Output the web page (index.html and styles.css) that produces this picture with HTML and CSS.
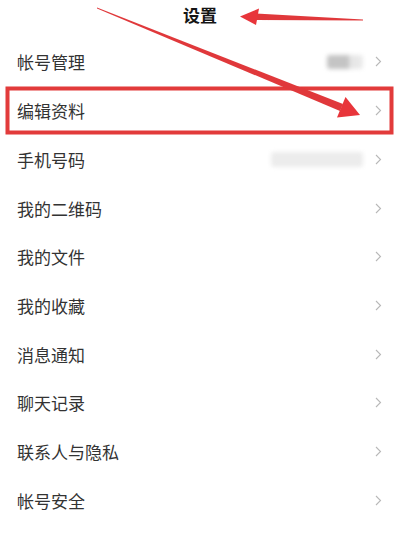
FILE: index.html
```html
<!DOCTYPE html>
<html lang="zh-CN">
<head>
<meta charset="utf-8">
<title>设置</title>
<link rel="stylesheet" href="styles.css">
</head>
<body>
<div class="page">
  <header class="header">设置</header>
  <ul class="list">
    <li class="row"><span class="label">帐号管理</span><span class="value"><span class="blur blur-account"></span></span><svg class="chev" viewBox="0 0 7 11"><path d="M1 1l4.5 4.5L1 10"/></svg></li>
    <li class="row"><span class="label">编辑资料</span><span class="value"></span><svg class="chev" viewBox="0 0 7 11"><path d="M1 1l4.5 4.5L1 10"/></svg></li>
    <li class="row"><span class="label">手机号码</span><span class="value"><span class="blur blur-phone"></span></span><svg class="chev" viewBox="0 0 7 11"><path d="M1 1l4.5 4.5L1 10"/></svg></li>
    <li class="row"><span class="label">我的二维码</span><span class="value"></span><svg class="chev" viewBox="0 0 7 11"><path d="M1 1l4.5 4.5L1 10"/></svg></li>
    <li class="row"><span class="label">我的文件</span><span class="value"></span><svg class="chev" viewBox="0 0 7 11"><path d="M1 1l4.5 4.5L1 10"/></svg></li>
    <li class="row"><span class="label">我的收藏</span><span class="value"></span><svg class="chev" viewBox="0 0 7 11"><path d="M1 1l4.5 4.5L1 10"/></svg></li>
    <li class="row"><span class="label">消息通知</span><span class="value"></span><svg class="chev" viewBox="0 0 7 11"><path d="M1 1l4.5 4.5L1 10"/></svg></li>
    <li class="row"><span class="label">聊天记录</span><span class="value"></span><svg class="chev" viewBox="0 0 7 11"><path d="M1 1l4.5 4.5L1 10"/></svg></li>
    <li class="row"><span class="label">联系人与隐私</span><span class="value"></span><svg class="chev" viewBox="0 0 7 11"><path d="M1 1l4.5 4.5L1 10"/></svg></li>
    <li class="row"><span class="label">帐号安全</span><span class="value"></span><svg class="chev" viewBox="0 0 7 11"><path d="M1 1l4.5 4.5L1 10"/></svg></li>
  </ul>
  <svg class="annot" viewBox="0 0 397 536" width="397" height="536">
    <defs>
      <filter id="soft" x="-5%" y="-5%" width="110%" height="110%"><feGaussianBlur stdDeviation="0.5"/></filter>
    </defs>
    <g filter="url(#soft)">
      <rect x="7.5" y="88.5" width="384" height="44" fill="none" stroke="#e23a3a" stroke-width="4"/>
      <polygon points="256,13.6 363,19.4 363,20.6 256,20" fill="#e0393b"/>
      <polygon points="240,16.5 259,8.5 256,25" fill="#e8353a"/>
      <polygon points="97,7.6 343,104 340,111 97,8.4" fill="#e0393b"/>
      <polygon points="360,115 345.5,97 337,117.5" fill="#e8353a"/>
    </g>
  </svg>
</div>
</body>
</html>
```
FILE: styles.css
```css
* { box-sizing: border-box; }
html, body { margin: 0; padding: 0; background: #fff; }
body {
  font-family: "Noto Sans CJK SC", "Noto Sans", sans-serif;
  color: #333;
}
.page {
  position: relative;
  width: 397px;
  height: 536px;
  overflow: hidden;
}
.header {
  height: 37.6px;
  display: flex;
  align-items: center;
  justify-content: center;
  padding-bottom: 8px;
  font-size: 17px;
  font-weight: 700;
  color: #151515;
  padding-left: 3px;
}
.list {
  list-style: none;
  margin: 0;
  padding: 0;
}
.row {
  height: 48.7px;
  display: flex;
  align-items: center;
  padding: 0 15px 0 17px;
}
.label {
  font-size: 17px;
  line-height: 1;
  color: #333;
  letter-spacing: 0;
}
.value {
  flex: 1;
  display: flex;
  justify-content: flex-end;
  align-items: center;
  padding-right: 12px;
}
.chev {
  width: 7px;
  height: 11px;
  flex: none;
}
.chev path {
  fill: none;
  stroke: #b8b8b8;
  stroke-width: 1.1;
}
.blur {
  display: block;
  filter: blur(2px);
  border-radius: 3px;
}
.blur-account {
  width: 36px;
  height: 14px;
  background: linear-gradient(90deg, #c4c4c4 0, #c4c4c4 60%, #e4e4e4 60%, #ebebeb 100%);
}
.blur-phone {
  width: 92px;
  height: 15px;
  background: #ececec;
}
.annot {
  position: absolute;
  left: 0;
  top: 0;
  pointer-events: none;
}
```
